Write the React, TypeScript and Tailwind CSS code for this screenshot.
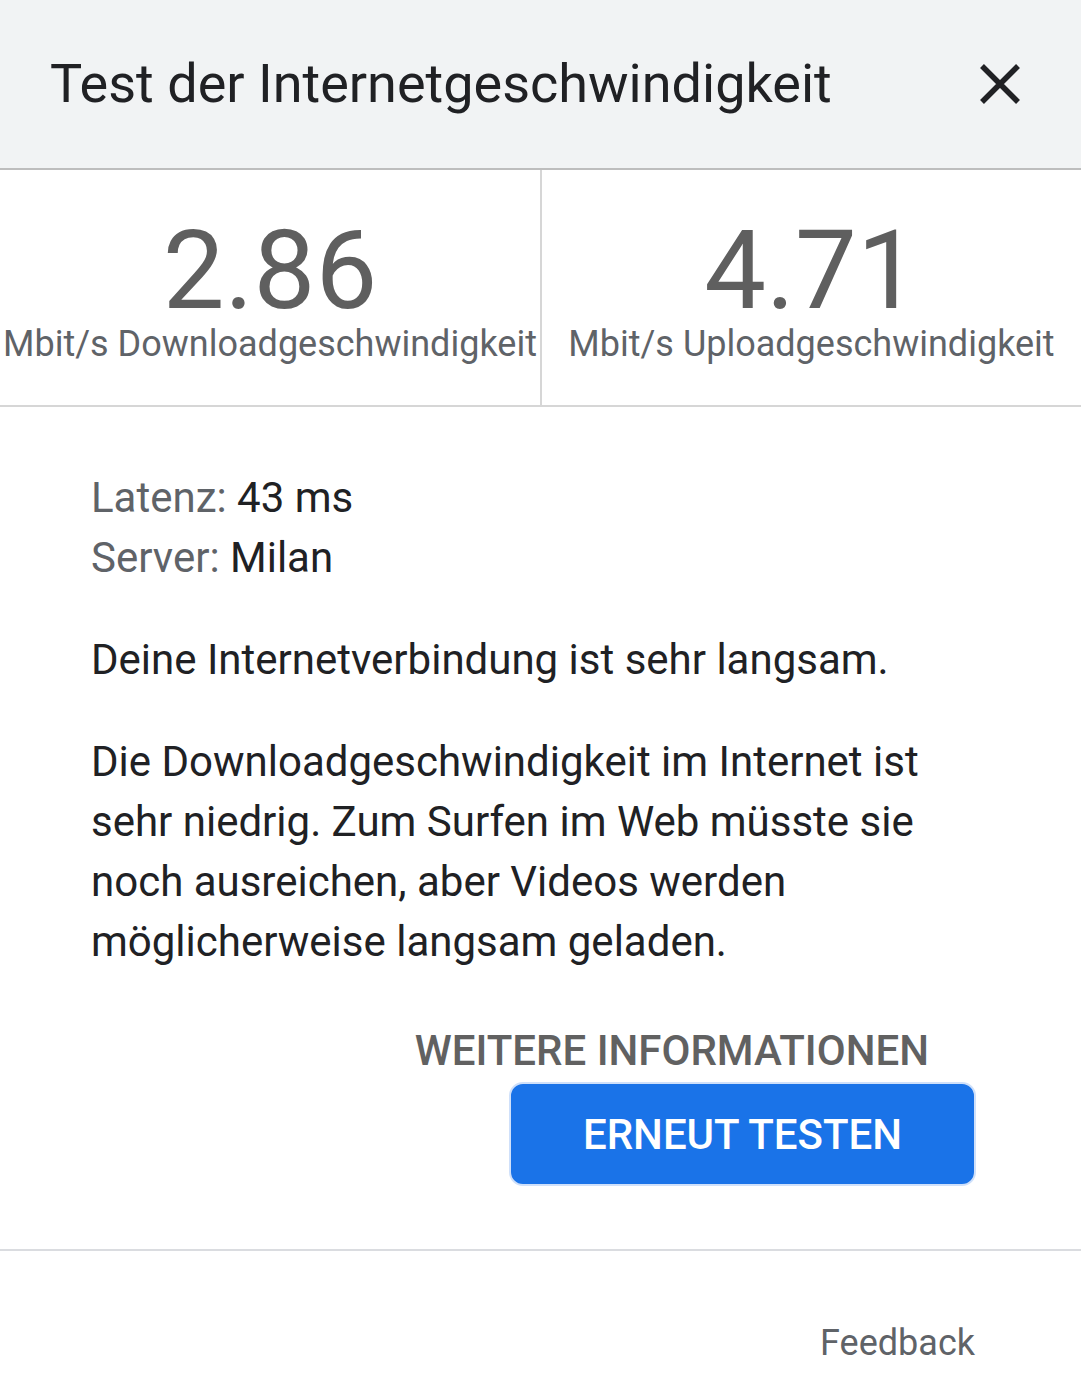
import React from "react";

export default function App() {
  const font = { fontFamily: "Roboto, 'Noto Sans', sans-serif" };
  return (
    <div className="w-[1081px] h-[1378px] bg-white overflow-hidden" style={font}>
      <div className="h-[170px] bg-[#f1f3f4] border-b-2 border-[#bdbdbd] flex items-center justify-between pl-[50px] pr-[60px]">
        <div className="text-[54px] text-[#202124] leading-none">Test der Internetgeschwindigkeit</div>
        <svg width="42" height="42" viewBox="0 0 42 42">
          <path d="M3 3 L39 39 M39 3 L3 39" stroke="#202124" strokeWidth="5.5" />
        </svg>
      </div>
      <div className="grid grid-cols-[542px_1fr] h-[237px] border-b-2 border-[#d6d6d6]">
        <div className="border-r-2 border-[#d6d6d6] flex flex-col items-center pt-[51px]">
          <div className="text-[110px] leading-[100px] text-[#5f5f5f]">2.86</div>
          <div className="text-[36px] leading-[40px] text-[#5f6368] mt-[3px] whitespace-nowrap">Mbit/s Downloadgeschwindigkeit</div>
        </div>
        <div className="flex flex-col items-center pt-[51px]">
          <div className="text-[110px] leading-[100px] text-[#5f5f5f]">4.71</div>
          <div className="text-[36px] leading-[40px] text-[#5f6368] mt-[3px] whitespace-nowrap">Mbit/s Uploadgeschwindigkeit</div>
        </div>
      </div>
      <div className="pl-[91px] pr-[60px] pt-[61px] text-[42px] leading-[60px] text-[#202124]">
        <div><span className="text-[#5f6368]">Latenz:</span> 43 ms</div>
        <div><span className="text-[#5f6368]">Server:</span> Milan</div>
        <p className="mt-[42px]">Deine Internetverbindung ist sehr langsam.</p>
        <p className="mt-[42px] w-[850px]">Die Downloadgeschwindigkeit im Internet ist sehr niedrig. Zum Surfen im Web müsste sie noch ausreichen, aber Videos werden möglicherweise langsam geladen.</p>
      </div>
      <div className="flex flex-col items-end pr-[105px] mt-[49px]">
        <div className="text-[42px] leading-[60px] font-medium text-[#616161] pr-[47px]">WEITERE INFORMATIONEN</div>
        <button className="mt-[1px] w-[467px] h-[104px] rounded-[14px] bg-[#1a73e8] border-2 border-[#cfe0fa] text-white text-[42px] font-medium">ERNEUT TESTEN</button>
      </div>
      <div className="mt-[63px] border-t-2 border-[#dadce0]"></div>
      <div className="flex justify-end pr-[106px] pt-[72px]">
        <div className="text-[36px] leading-[40px] text-[#5f6368]">Feedback</div>
      </div>
    </div>
  );
}
